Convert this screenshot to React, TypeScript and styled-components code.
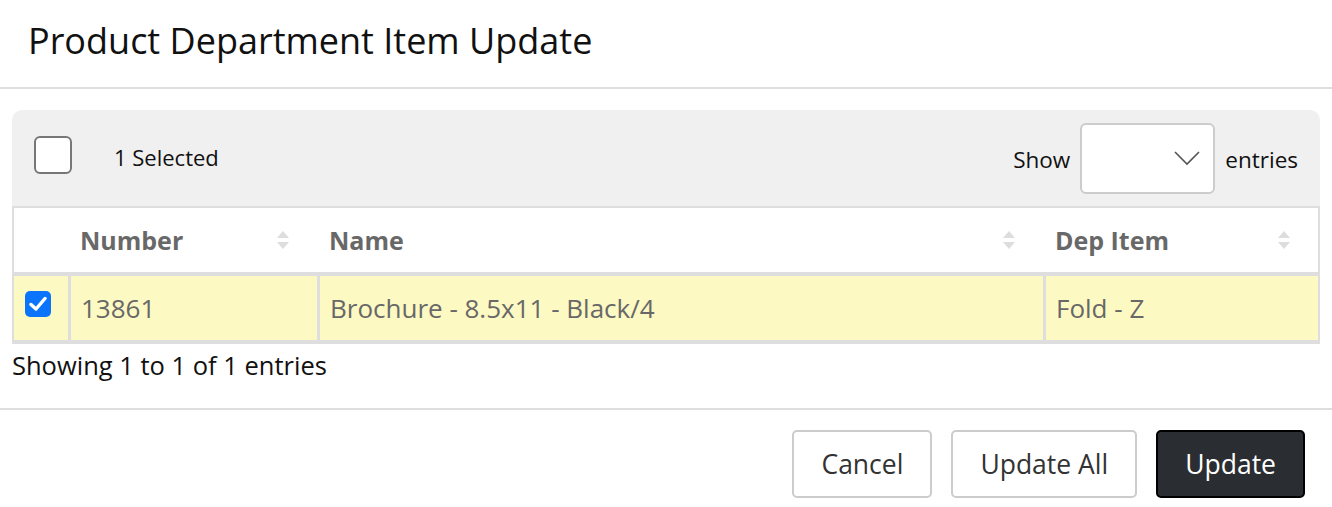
import React from "react";
import styled, { createGlobalStyle } from "styled-components";

const GlobalStyle = createGlobalStyle`
  html, body {
    margin: 0;
    padding: 0;
    background: #fff;
    font-family: "Open Sans", Lato, sans-serif;
    color: #111;
  }
  * { box-sizing: border-box; }
`;

const Modal = styled.div`
  width: 1332px;
  height: 507px;
  display: flex;
  flex-direction: column;
  background: #fff;
`;

const Header = styled.div`
  height: 89px;
  border-bottom: 2px solid #dedede;
  padding: 17px 28px 0;
  h1 {
    margin: 0;
    font-weight: 400;
    font-size: 36px;
    line-height: 48px;
    color: #111;
  }
`;

const Body = styled.div`
  padding: 21px 12px 0;
`;

const Panel = styled.div`
  width: 1308px;
  background: #f0f0f0;
  border-radius: 10px 10px 0 0;
`;

const Toolbar = styled.div`
  height: 96px;
  display: flex;
  align-items: center;
  justify-content: space-between;
  padding: 0 22px 0 22px;
`;

const SelectAll = styled.div`
  display: flex;
  align-items: center;
  gap: 42px;
  margin-top: -6px;
  span {
    font-size: 22px;
    color: #111;
    padding-top: 3px;
  }
`;

const BigBox = styled.div`
  width: 38px;
  height: 38px;
  border: 2px solid #777;
  border-radius: 6px;
  background: #fff;
`;

const Length = styled.div`
  display: flex;
  align-items: center;
  gap: 10px;
  font-size: 22.5px;
  color: #111;
  span {
    padding-top: 3px;
  }
`;

const Select = styled.div`
  width: 135px;
  height: 71px;
  background: #fff;
  border: 2px solid #ccc;
  border-radius: 6px;
  display: flex;
  align-items: center;
  justify-content: flex-end;
  padding-right: 13px;
`;

const Table = styled.div`
  border: 2px solid #dedede;
  border-bottom-width: 4px;
  background: #fff;
`;

const Row = styled.div<{ $head?: boolean }>`
  display: grid;
  grid-template-columns: 54px 249px 726px 1fr;
  height: ${(p) => (p.$head ? "68px" : "64px")};
  background: ${(p) => (p.$head ? "#fff" : "#fdf9c3")};
  border-bottom: ${(p) => (p.$head ? "4px solid #dedede" : "none")};
`;

const Cell = styled.div<{ $head?: boolean; $line?: boolean }>`
  display: flex;
  align-items: center;
  justify-content: space-between;
  padding: 0 27px 0 ${(p) => (p.$line ? "10px" : "12px")};
  font-size: ${(p) => (p.$head ? "25px" : "26px")};
  font-weight: ${(p) => (p.$head ? 700 : 400)};
  color: #686868;
  border-left: ${(p) => (p.$line ? "3px solid #dedede" : "none")};
`;

const CheckCell = styled.div`
  display: flex;
  align-items: center;
  padding: 0 0 8px 11px;
`;

const Checked = styled.div`
  width: 26px;
  height: 26px;
  border-radius: 5px;
  background: #0a75fb;
  display: flex;
  align-items: center;
  justify-content: center;
`;

const Info = styled.div`
  font-size: 25.5px;
  color: #111;
  padding: 4px 0 0;
  height: 64px;
`;

const Footer = styled.div`
  border-top: 2px solid #dedede;
  display: flex;
  justify-content: flex-end;
  gap: 19px;
  padding: 20px 27px 0 0;
`;

const Button = styled.button<{ $dark?: boolean }>`
  height: 68px;
  padding: 0 27px;
  font-family: inherit;
  font-size: 26.5px;
  border-radius: 5px;
  border: 2px solid ${(p) => (p.$dark ? "#000" : "#ccc")};
  background: ${(p) => (p.$dark ? "#2a2e32" : "#fff")};
  color: ${(p) => (p.$dark ? "#fff" : "#333")};
`;

const Sort = () => (
  <svg width="14" height="20" viewBox="0 0 14 20">
    <path d="M7 1 L13 8 H1 Z" fill="#ddd" />
    <path d="M7 19 L13 12 H1 Z" fill="#ddd" />
  </svg>
);

const Chevron = () => (
  <svg width="26" height="16" viewBox="0 0 26 16">
    <path d="M1 2 L13 14 L25 2" fill="none" stroke="#555" strokeWidth="1.6" />
  </svg>
);

const Tick = () => (
  <svg width="18" height="16" viewBox="0 0 18 16">
    <path d="M2 8.5 L7 13 L16 2.5" fill="none" stroke="#fff" strokeWidth="3.4" strokeLinecap="round" strokeLinejoin="round" />
  </svg>
);

const App = () => {
  return (
    <Modal>
      <GlobalStyle />
      <Header>
        <h1>Product Department Item Update</h1>
      </Header>
      <Body>
        <Panel>
          <Toolbar>
            <SelectAll>
              <BigBox />
              <span>1 Selected</span>
            </SelectAll>
            <Length>
              <span>Show</span>
              <Select>
                <Chevron />
              </Select>
              <span>entries</span>
            </Length>
          </Toolbar>
          <Table>
            <Row $head>
              <Cell />
              <Cell $head>
                Number <Sort />
              </Cell>
              <Cell $head>
                Name <Sort />
              </Cell>
              <Cell $head>
                Dep Item <Sort />
              </Cell>
            </Row>
            <Row>
              <CheckCell>
                <Checked>
                  <Tick />
                </Checked>
              </CheckCell>
              <Cell $line>13861</Cell>
              <Cell $line>Brochure - 8.5x11 - Black/4</Cell>
              <Cell $line>Fold - Z</Cell>
            </Row>
          </Table>
        </Panel>
        <Info>Showing 1 to 1 of 1 entries</Info>
      </Body>
      <Footer>
        <Button>Cancel</Button>
        <Button>Update All</Button>
        <Button $dark>Update</Button>
      </Footer>
    </Modal>
  );
};

export default App;
